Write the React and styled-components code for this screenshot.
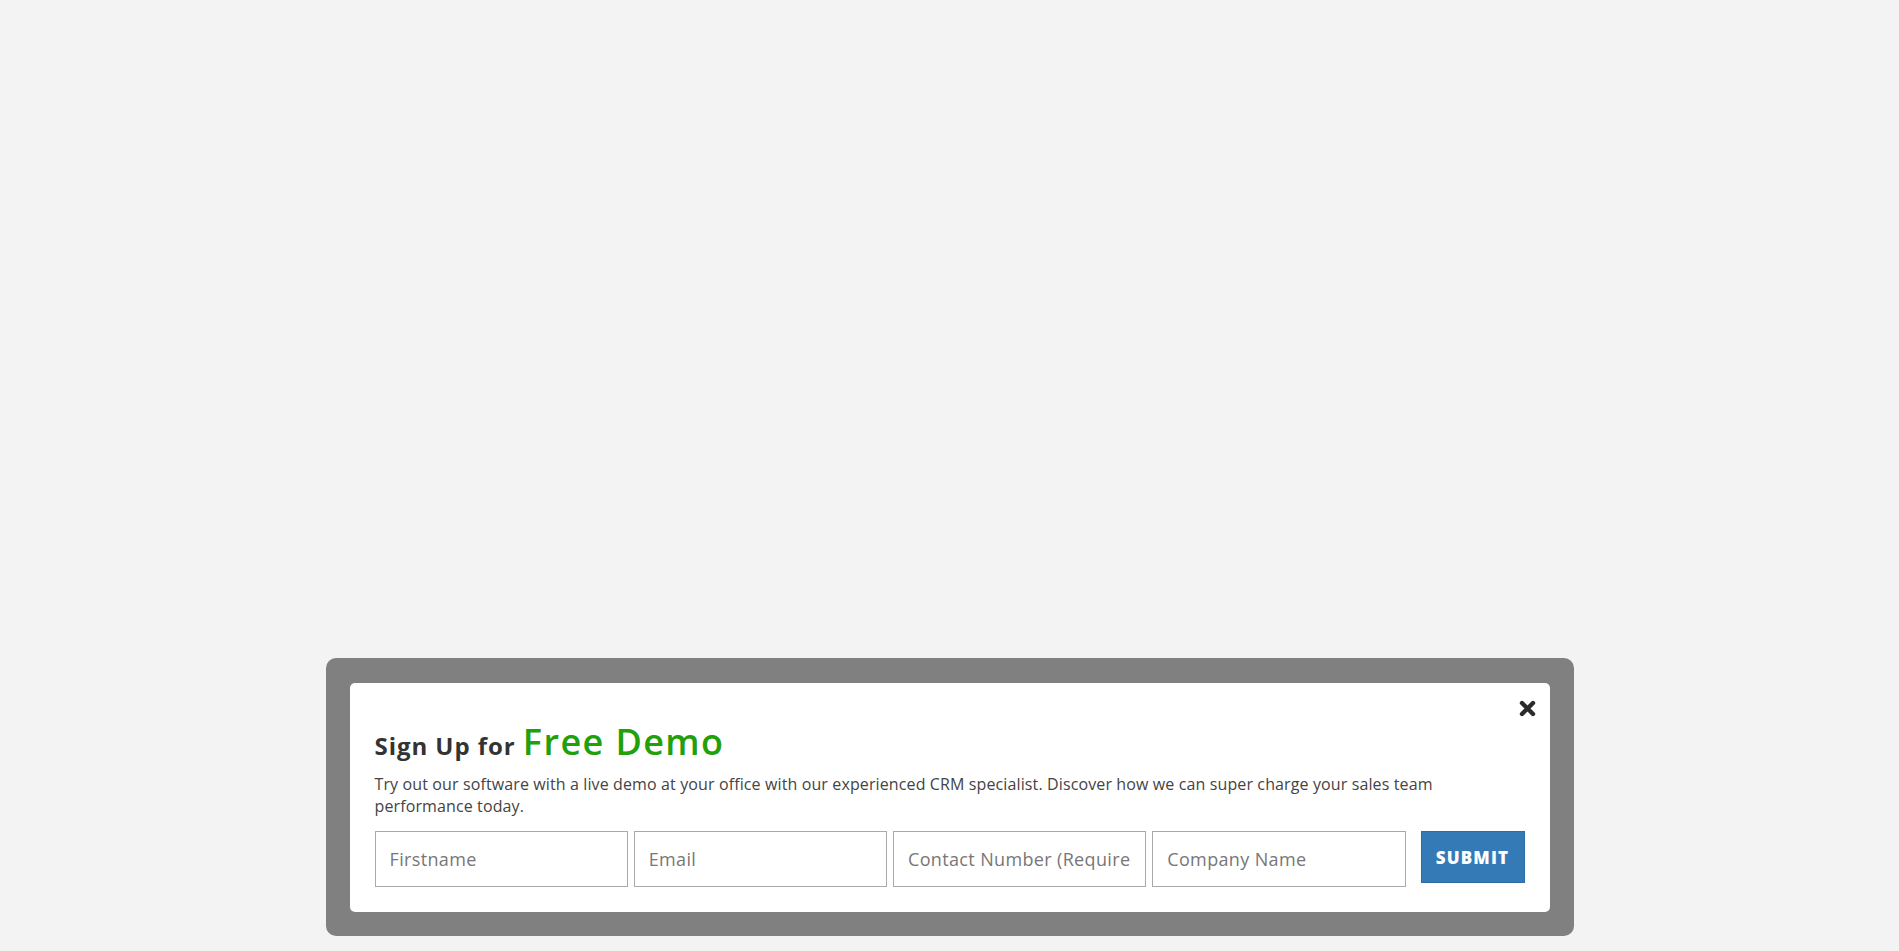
import React from 'react'
import styled, { createGlobalStyle } from 'styled-components'

const GlobalStyle = createGlobalStyle`
  html, body {
    margin: 0;
    padding: 0;
    background: #f3f3f3;
    font-family: 'Open Sans', 'Liberation Sans', sans-serif;
  }
  * {
    box-sizing: border-box;
  }
`

const Page = styled.div`
  min-height: 100vh;
  display: flex;
  flex-direction: column;
  justify-content: flex-end;
  align-items: center;
  padding-bottom: 15px;
`

const Frame = styled.div`
  width: 1248px;
  padding: 25px 24px 24px;
  background: #808080;
  border-radius: 10px;
`

const Card = styled.div`
  position: relative;
  background: #fff;
  border-radius: 5px;
  padding: 41px 25px 25px;
`

const Close = styled.button`
  position: absolute;
  top: 17px;
  right: 14px;
  width: 17px;
  height: 17px;
  padding: 0;
  border: 0;
  background: none;
  cursor: pointer;
  display: flex;
`

const Title = styled.h2`
  margin: 0;
  font-size: 24px;
  font-weight: 700;
  line-height: 1;
  letter-spacing: 0.95px;
  color: #333;
`

const Accent = styled.span`
  font-size: 36px;
  font-weight: 600;
  line-height: 1;
  letter-spacing: 1.4px;
  color: #22a00a;
`

const Lead = styled.p`
  margin: 13px 0 13px;
  max-width: 1110px;
  font-size: 16px;
  line-height: 22.6px;
  letter-spacing: 0.12px;
  color: #444;
`

const Form = styled.form`
  display: flex;
  align-items: flex-start;
  gap: 6px;
`

const Field = styled.input`
  flex: 1;
  min-width: 0;
  height: 56px;
  padding: 0 14px;
  border: 1px solid #aaa;
  border-radius: 0;
  font-family: inherit;
  font-size: 18px;
  letter-spacing: 0.35px;
  color: #333;
  outline: none;

  &::placeholder {
    color: #777;
  }
`

const Submit = styled.button`
  flex: none;
  margin-left: 9px;
  width: 104px;
  height: 52px;
  border: 1px solid #2e6da4;
  background: #337ab7;
  color: #fff;
  font-family: inherit;
  font-size: 17px;
  font-weight: 800;
  letter-spacing: 1.2px;
  text-transform: uppercase;
  cursor: pointer;
`

const fields = ['Firstname', 'Email', 'Contact Number (Required)', 'Company Name']

export default function App() {
  return (
    <>
      <GlobalStyle />
      <Page>
        <Frame>
          <Card>
            <Close aria-label="Close">
              <svg width="17" height="17" viewBox="0 0 17 17">
                <path d="M3 3 L14 14 M14 3 L3 14" stroke="#2b2b2b" strokeWidth="4.4" strokeLinecap="round" />
              </svg>
            </Close>
            <Title>
              Sign Up for <Accent>Free Demo</Accent>
            </Title>
            <Lead>
              Try out our software with a live demo at your office with our experienced CRM specialist. Discover how we
              can super charge your sales team performance today.
            </Lead>
            <Form onSubmit={(e) => e.preventDefault()}>
              {fields.map((f) => (
                <Field key={f} placeholder={f} />
              ))}
              <Submit type="submit">Submit</Submit>
            </Form>
          </Card>
        </Frame>
      </Page>
    </>
  )
}
